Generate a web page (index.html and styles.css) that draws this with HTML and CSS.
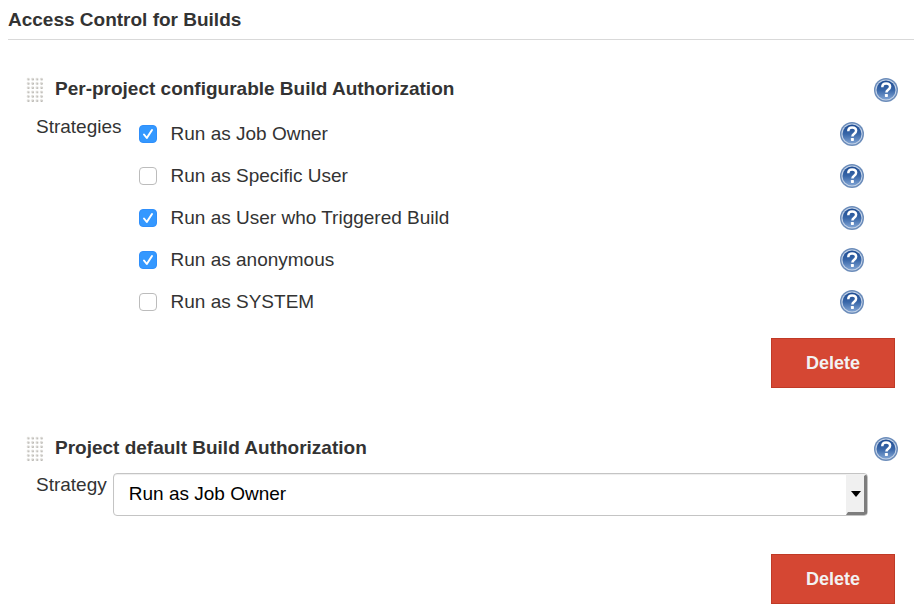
FILE: index.html
```html
<!DOCTYPE html>
<html lang="en">
<head>
<meta charset="utf-8">
<meta name="viewport" content="width=device-width, initial-scale=1">
<title>Access Control for Builds</title>
<link rel="stylesheet" href="styles.css">
</head>
<body>
<svg class="sprite" aria-hidden="true">
  <defs>
    <linearGradient id="disc" x1="0" y1="0" x2="0" y2="1">
      <stop offset="0" stop-color="#1d4b92"/>
      <stop offset="0.5" stop-color="#3866a8"/>
      <stop offset="1" stop-color="#7fa3d3"/>
    </linearGradient>
    <pattern id="dots" width="4.4" height="4.3" patternUnits="userSpaceOnUse">
      <circle cx="2.1" cy="2" r="1.3" fill="#dedcd8"/>
      <path d="M1.300 3.200L3.300 1.200V3.200Z" fill="#a9a7a2"/>
    </pattern>
  </defs>
  <symbol id="help" viewBox="0 0 24 24">
    <circle cx="12" cy="12" r="12" fill="#6b8cba"/>
    <circle cx="12" cy="12" r="10.6" fill="#c3d2e7"/>
    <circle cx="12" cy="12" r="9.5" fill="url(#disc)"/>
    <path d="M8.300 9.200C8.300 6.700 9.800 5.500 12.100 5.500s4 1.300 4 3.300c0 2.900-3.700 2.900-3.700 5.600" fill="none" stroke="#fff" stroke-width="2.500"/>
    <rect x="10.900" y="16" width="3" height="2.900" rx="0.600" fill="#fff"/>
  </symbol>
  <symbol id="grip" viewBox="0 0 18 26">
    <rect width="17.600" height="25.800" fill="url(#dots)"/>
  </symbol>
</svg>

<main class="page">
  <h1 class="page-title">Access Control for Builds</h1>

  <section class="block">
    <header class="block-head">
      <svg class="grip" aria-hidden="true"><use href="#grip"/></svg>
      <h2 class="block-title">Per-project configurable Build Authorization</h2>
      <button class="help" type="button" aria-label="Help for per-project authorization"><svg><use href="#help"/></svg></button>
    </header>
    <fieldset class="field" aria-labelledby="strategies">
      <span class="field-label" id="strategies">Strategies</span>
      <ul class="options">
        <li class="option">
          <label class="choice"><input class="check" type="checkbox" checked>Run as Job Owner</label>
          <button class="help" type="button" aria-label="Help for Run as Job Owner"><svg><use href="#help"/></svg></button>
        </li>
        <li class="option">
          <label class="choice"><input class="check" type="checkbox">Run as Specific User</label>
          <button class="help" type="button" aria-label="Help for Run as Specific User"><svg><use href="#help"/></svg></button>
        </li>
        <li class="option">
          <label class="choice"><input class="check" type="checkbox" checked>Run as User who Triggered Build</label>
          <button class="help" type="button" aria-label="Help for Run as User who Triggered Build"><svg><use href="#help"/></svg></button>
        </li>
        <li class="option">
          <label class="choice"><input class="check" type="checkbox" checked>Run as anonymous</label>
          <button class="help" type="button" aria-label="Help for Run as anonymous"><svg><use href="#help"/></svg></button>
        </li>
        <li class="option">
          <label class="choice"><input class="check" type="checkbox">Run as SYSTEM</label>
          <button class="help" type="button" aria-label="Help for Run as SYSTEM"><svg><use href="#help"/></svg></button>
        </li>
      </ul>
    </fieldset>
    <footer class="actions"><button class="delete" type="button">Delete</button></footer>
  </section>

  <section class="block">
    <header class="block-head">
      <svg class="grip" aria-hidden="true"><use href="#grip"/></svg>
      <h2 class="block-title">Project default Build Authorization</h2>
      <button class="help" type="button" aria-label="Help for project default authorization"><svg><use href="#help"/></svg></button>
    </header>
    <div class="field field-select">
      <label class="field-label" for="strategy">Strategy</label>
      <div class="select-box">
        <select class="select" id="strategy">
          <option selected>Run as Job Owner</option>
          <option>Run as Specific User</option>
          <option>Run as User who Triggered Build</option>
          <option>Run as anonymous</option>
          <option>Run as SYSTEM</option>
        </select>
        <span class="select-arrow" aria-hidden="true"><svg viewBox="0 0 10 6"><path d="M0 0H10L5 6Z"/></svg></span>
      </div>
    </div>
    <footer class="actions"><button class="delete" type="button">Delete</button></footer>
  </section>
</main>
</body>
</html>
```

FILE: styles.css
```css
* {
  box-sizing: border-box;
}

body {
  margin: 0;
  background: #fff;
  color: #333;
  font: 19px/24px "Liberation Sans", Arial, sans-serif;
}

.sprite {
  position: absolute;
  width: 0;
  height: 0;
}

.page {
  padding: 8px 0 0 8px;
}

.page-title,
.block-title {
  margin: 0;
  font-size: 19px;
  line-height: 24px;
  font-weight: bold;
}

.page-title {
  padding-bottom: 7px;
  border-bottom: 1px solid #d9d9d9;
}

.block {
  padding: 37px 16px 0 18px;
}

.block + .block {
  padding-top: 48px;
}

.block-head {
  display: flex;
  align-items: center;
  height: 26px;
}

.grip {
  flex: none;
  width: 18px;
  height: 26px;
  margin-right: 11px;
  cursor: move;
}

.block-title {
  flex: 1;
  padding-bottom: 2px;
}

.help {
  flex: none;
  width: 24px;
  height: 24px;
  padding: 0;
  border: 0;
  border-radius: 50%;
  background: none;
  cursor: pointer;
}

.help svg {
  display: block;
  width: 24px;
  height: 24px;
}

.field {
  display: flex;
  min-width: 0;
  margin: 0;
  padding: 12px 34px 0 10px;
  border: 0;
}

.field-label {
  flex: none;
}

.options {
  flex: 1;
  display: grid;
  gap: 18px;
  margin: 0;
  padding: 7px 0 0 17px;
  list-style: none;
}

.option {
  display: flex;
  align-items: center;
  justify-content: space-between;
}

.choice {
  display: flex;
  align-items: center;
}

.check {
  appearance: none;
  width: 18px;
  height: 18px;
  margin: 0 14px 0 0;
  border: 1px solid #bcbcbc;
  border-radius: 4px;
  background: #fff;
}

.check:checked {
  border-color: #2f8ffb;
  background: #3498ff url("data:image/svg+xml,%3Csvg xmlns='http://www.w3.org/2000/svg' viewBox='0 0 16 16'%3E%3Cpath d='M4 8.500L6.800 12L12 4' fill='none' stroke='white' stroke-width='2' stroke-linecap='round' stroke-linejoin='round'/%3E%3C/svg%3E") center / 16px 16px no-repeat;
}

.actions {
  display: flex;
  justify-content: flex-end;
  padding: 24px 3px 0 0;
}

.delete {
  height: 50px;
  padding: 0 34px;
  border: 1px solid #c03a26;
  background: #d54733;
  color: #f2f2f2;
  font: bold 18px/24px "Liberation Sans", Arial, sans-serif;
  cursor: pointer;
}

.field-select {
  padding-top: 11px;
  padding-right: 30px;
}

.select-box {
  position: relative;
  flex: 1;
  margin-left: 6px;
}

.select {
  appearance: none;
  display: block;
  width: 100%;
  height: 43px;
  padding: 0 36px 2px 15px;
  border: 1px solid #c4c4c4;
  border-radius: 4px;
  background: #fff;
  box-shadow: inset 0 1px 1px #eee;
  color: #000;
  font: 19px/24px "Liberation Sans", Arial, sans-serif;
}

.select-arrow {
  position: absolute;
  top: 1px;
  right: 1px;
  bottom: 1px;
  display: flex;
  align-items: center;
  justify-content: center;
  width: 21px;
  border-style: solid;
  border-color: #f0f0f0 #7d7d7d #7d7d7d #f0f0f0;
  border-width: 2px 3px 3px 2px;
  border-radius: 0 3px 3px 0;
  background: #f0f0f0;
  pointer-events: none;
}

.select-arrow svg {
  flex: none;
  width: 10px;
  height: 6px;
}

.field-select + .actions {
  padding-top: 38px;
}
```
